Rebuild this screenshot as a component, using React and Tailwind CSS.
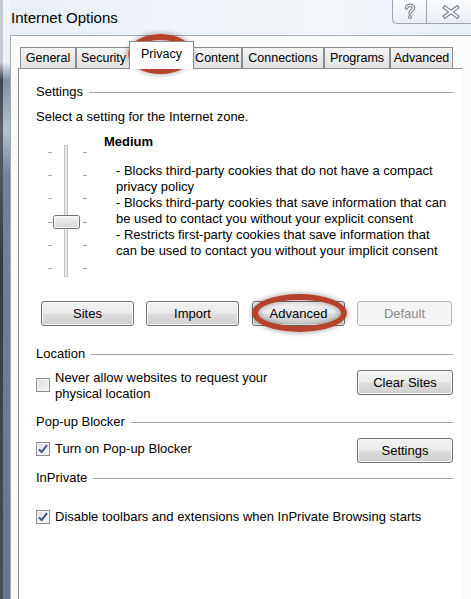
import React from "react";

const tabs = [
  { label: "General", cls: "w-[56px]" },
  { label: "Security", cls: "w-[55px]" },
  { label: "Privacy", cls: "w-[65px] -mx-[2px]", active: true },
  { label: "Content", cls: "w-[50px]" },
  { label: "Connections", cls: "w-[82px]" },
  { label: "Programs", cls: "w-[66px]" },
  { label: "Advanced", cls: "w-[63px]" },
];

const btn =
  "h-[25px] flex items-center justify-center rounded-[3px] border border-[#707070] bg-[linear-gradient(to_bottom,#f2f2f2_0%,#ebebeb_48%,#dddddd_52%,#cfcfcf_100%)] shadow-[inset_0_0_0_1px_#fbfbfb] text-black";

const ticks = [18, 41, 64, 88, 111, 134];

const GroupLabel = ({ children }) => (
  <div className="flex items-center h-4">
    <span>{children}</span>
    <div className="flex-1 h-px bg-[#a0a0a0] ml-[6px]" />
  </div>
);

const Checkbox = ({ checked }) => (
  <div className="w-[14px] h-[14px] shrink-0 border border-[#8f8f8f] bg-[linear-gradient(135deg,#dcdcdc,#f8f8f8)] shadow-[inset_0_0_0_1px_#f4f4f4] flex items-center justify-center">
    {checked && (
      <svg width="12" height="12" viewBox="0 0 12 12">
        <path d="M2 6.3 L4.6 9.2 L10 2.2" fill="none" stroke="#3d5585" strokeWidth="1.9" strokeLinejoin="round" />
      </svg>
    )}
  </div>
);

const Ellipse = ({ className }) => (
  <div
    className={`absolute rounded-[50%] border-[6px] border-[#b5432b] shadow-[0_0_5px_1px_rgba(0,0,0,0.3),inset_0_0_5px_1px_rgba(0,0,0,0.3)] pointer-events-none ${className}`}
  />
);

export default function App() {
  return (
    <div className="relative w-[471px] h-[599px] overflow-hidden flex bg-[#eaf0f6] text-[13px] leading-4 text-black font-['Liberation_Sans',Arial,sans-serif]">
      {/* left window frame */}
      <div className="flex w-[10px] shrink-0">
        <div className="w-[3px] bg-[linear-gradient(to_bottom,#c6cbd1_0px,#c6cbd1_62px,#3f4246_80px,#5d6166_130px,#3a3d40_260px,#4a4e55_100%)]" />
        <div className="w-[7px] bg-[linear-gradient(to_bottom,#f1f4f8_0px,#edf1f6_62px,#7f8fa2_80px,#b7c2ce_130px,#71829a_175px,#65768d_100%)]" />
      </div>

      <div className="flex-1 flex flex-col min-w-0">
        {/* title bar */}
        <div className="h-[35px] shrink-0 flex justify-between items-start bg-[linear-gradient(to_right,#e9eff6,#f3f7fb_70%,#e7eef6)]">
          <div className="pl-[1px] pt-[9px] text-[15px] leading-[18px] text-black">Internet Options</div>
          <div className="flex">
            <div className="w-[34px] h-[24px] border-l border-b border-[#98a4b2] rounded-bl-[5px] bg-[linear-gradient(to_bottom,#fbfcfd,#e9eef4)] flex items-center justify-center">
              <svg width="14" height="17" viewBox="0 0 14 17">
                <g fill="none" strokeLinecap="round">
                  <path d="M3.5 5 C3.5 1.5 10.5 1.5 10.5 5 C10.5 7.5 7 7.5 7 10" stroke="#7a8594" strokeWidth="3.6" />
                  <path d="M3.5 5 C3.5 1.5 10.5 1.5 10.5 5 C10.5 7.5 7 7.5 7 10" stroke="#fdfdfd" strokeWidth="1.4" />
                  <path d="M7 14 L7 14.2" stroke="#7a8594" strokeWidth="3.8" />
                  <path d="M7 14 L7 14.2" stroke="#fdfdfd" strokeWidth="1.6" />
                </g>
              </svg>
            </div>
            <div className="w-[45px] h-[24px] border-l border-b border-[#98a4b2] bg-[linear-gradient(to_bottom,#fbfcfd,#e9eef4)] flex items-center justify-center pl-[4px]">
              <svg width="18" height="14" viewBox="0 0 18 14">
                <g fill="none" strokeLinecap="square">
                  <path d="M3 2.5 L15 11.5 M15 2.5 L3 11.5" stroke="#7a8594" strokeWidth="4" />
                  <path d="M3 2.5 L15 11.5 M15 2.5 L3 11.5" stroke="#fdfdfd" strokeWidth="1.6" />
                </g>
              </svg>
            </div>
          </div>
        </div>

        {/* dialog body */}
        <div className="flex-1 flex flex-col border-l border-t border-[#a3abb5] bg-[#fbfbfb] pl-[7px]">
          {/* tabs */}
          <div className="h-[32px] shrink-0 flex items-end pl-[2px] text-[12.5px]">
            {tabs.map((t) =>
              t.active ? (
                <div
                  key={t.label}
                  className={`${t.cls} relative z-10 h-[28px] -mb-px pt-[4px] text-center bg-white border-l border-r border-t border-[#898c95]`}
                >
                  {t.label}
                </div>
              ) : (
                <div
                  key={t.label}
                  className={`${t.cls} h-[21px] flex items-center justify-center border-l border-r border-t border-[#898c95] bg-[linear-gradient(to_bottom,#f3f3f3,#e3e3e3)]`}
                >
                  {t.label}
                </div>
              )
            )}
          </div>

          {/* tab page */}
          <div className="flex-1 w-[444px] bg-white border-l border-t border-[#898c95] pl-[17px] pt-[15px]">
            <div className="w-[417px]">
              <GroupLabel>Settings</GroupLabel>
              <div className="mt-[9px]">Select a setting for the Internet zone.</div>

              <div className="mt-[9px] h-[150px] flex">
                <svg width="68" height="150" viewBox="0 0 68 150" className="shrink-0">
                  <defs>
                    <linearGradient id="thumb" x1="0" y1="0" x2="0" y2="1">
                      <stop offset="0" stopColor="#f4f4f4" />
                      <stop offset="1" stopColor="#d5d5d5" />
                    </linearGradient>
                  </defs>
                  {ticks.map((y) => (
                    <g key={y}>
                      <rect x="12" y={y} width="4" height="1" fill="#a8a8a8" />
                      <rect x="47" y={y} width="4" height="1" fill="#a8a8a8" />
                    </g>
                  ))}
                  <rect x="28.5" y="11.5" width="3" height="131" fill="#e8e9ea" stroke="#c2c4c6" />
                  <rect x="17.5" y="81.5" width="26" height="13" rx="2" fill="url(#thumb)" stroke="#6f6f6f" />
                  <rect x="18.5" y="82.5" width="24" height="11" rx="1" fill="none" stroke="#fafafa" />
                </svg>
                <div className="flex flex-col">
                  <div className="font-bold">Medium</div>
                  <div className="mt-[13px] pl-[12px] whitespace-nowrap">
                    <div>- Blocks third-party cookies that do not have a compact</div>
                    <div>privacy policy</div>
                    <div>- Blocks third-party cookies that save information that can</div>
                    <div>be used to contact you without your explicit consent</div>
                    <div>- Restricts first-party cookies that save information that</div>
                    <div>can be used to contact you without your implicit consent</div>
                  </div>
                </div>
              </div>

              <div className="mt-[17px] pl-[5px] flex">
                <div className={`${btn} w-[93px]`}>Sites</div>
                <div className={`${btn} w-[93px] ml-[12px]`}>Import</div>
                <div className={`${btn} w-[93px] ml-[13px]`}>Advanced</div>
                <div className="w-[95px] ml-[12px] h-[25px] flex items-center justify-center rounded-[3px] border border-[#b5b9bc] bg-[#f4f4f4] text-[#8a8a8a]">
                  Default
                </div>
              </div>

              <div className="mt-[20px]">
                <GroupLabel>Location</GroupLabel>
              </div>
              <div className="mt-[8px] flex justify-between items-start">
                <div className="flex items-start">
                  <div className="mt-[8px]">
                    <Checkbox />
                  </div>
                  <div className="ml-[5px]">
                    <div>Never allow websites to request your</div>
                    <div>physical location</div>
                  </div>
                </div>
                <div className={`${btn} w-[96px]`}>Clear Sites</div>
              </div>

              <div className="mt-[12px]">
                <GroupLabel>Pop-up Blocker</GroupLabel>
              </div>
              <div className="mt-[8px] flex justify-between items-start">
                <div className="flex items-center mt-[3px]">
                  <Checkbox checked />
                  <div className="ml-[5px]">Turn on Pop-up Blocker</div>
                </div>
                <div className={`${btn} w-[96px]`}>Settings</div>
              </div>

              <div className="mt-[7px]">
                <GroupLabel>InPrivate</GroupLabel>
              </div>
              <div className="mt-[23px] flex items-center">
                <Checkbox checked />
                <div className="ml-[5px]">Disable toolbars and extensions when InPrivate Browsing starts</div>
              </div>
            </div>
          </div>
        </div>
      </div>

      {/* annotation rings */}
      <Ellipse className="left-[128px] top-[34px] w-[65px] h-[40px]" />
      <Ellipse className="left-[252px] top-[294px] w-[95px] h-[38px]" />
    </div>
  );
}
